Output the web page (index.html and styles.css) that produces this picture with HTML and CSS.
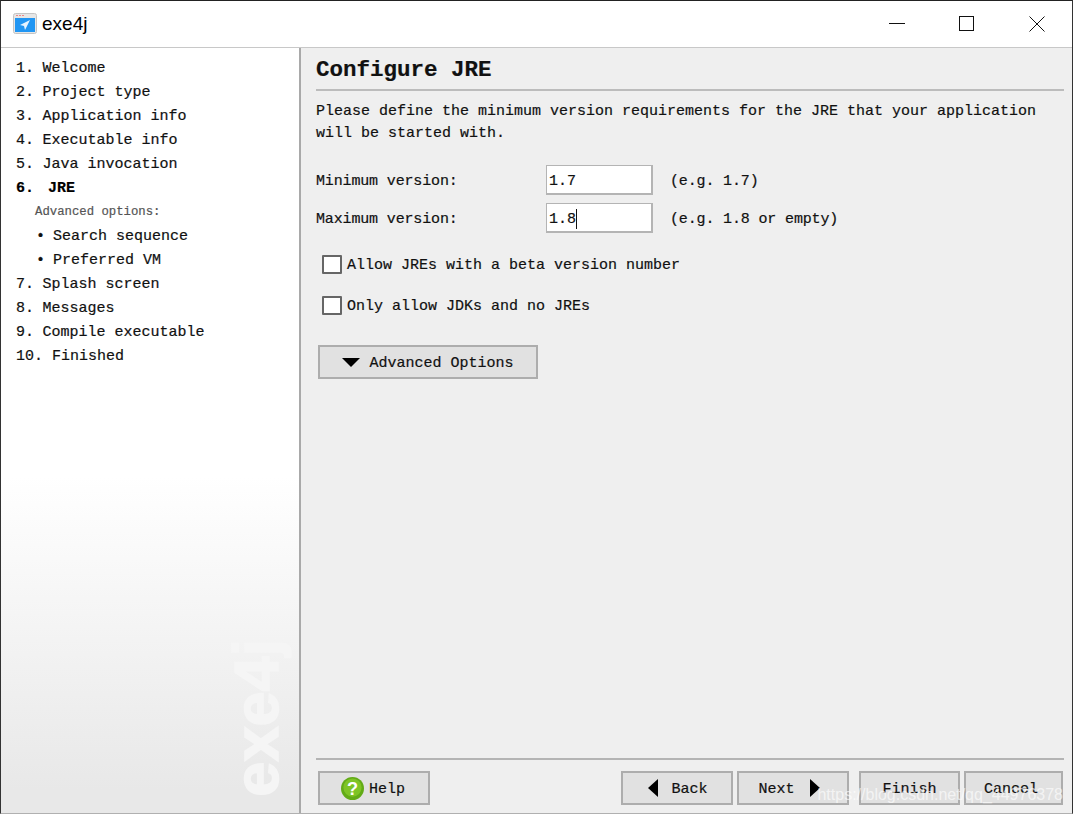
FILE: index.html
```html
<!DOCTYPE html>
<html lang="en">
<head>
    <meta charset="UTF-8">
    <meta name="viewport" content="width=device-width, initial-scale=1.0">
    <title>exe4j</title>
    <link rel="stylesheet" href="styles.css">
</head>
<body>
    <div class="window">
        <!-- Titelleiste -->
        <header class="titlebar">
            <svg class="app-icon" width="24" height="21" viewBox="0 0 24 21">
                <rect x="0.5" y="0.5" width="23" height="20" rx="2" fill="#e6e6e6" stroke="#c4c4c4"/>
                <rect x="3" y="2" width="2" height="1" fill="#e88"/>
                <rect x="6" y="2" width="2" height="1" fill="#e88"/>
                <rect x="9" y="2" width="2" height="1" fill="#e88"/>
                <rect x="2" y="5" width="20" height="14" fill="#2196f3"/>
                <path d="M17 7 L7 12 L11 13 L12 17 Z" fill="#e6f4ff"/>
            </svg>
            <span class="app-title">exe4j</span>
            <div class="window-controls">
                <svg class="win-btn" width="16" height="16" viewBox="0 0 16 16"><path d="M0 7.5H16" stroke="#111"/></svg>
                <svg class="win-btn" width="16" height="16" viewBox="0 0 16 16"><rect x="0.5" y="0.5" width="14" height="14" fill="none" stroke="#111"/></svg>
                <svg class="win-btn" width="16" height="16" viewBox="0 0 16 16"><path d="M0.5 0.5L15.5 15.5M15.5 0.5L0.5 15.5" stroke="#111"/></svg>
            </div>
        </header>

        <div class="layout">
            <!-- Schritte links -->
            <nav class="sidebar">
                <div class="step"><span class="num">1.</span>Welcome</div>
                <div class="step"><span class="num">2.</span>Project type</div>
                <div class="step"><span class="num">3.</span>Application info</div>
                <div class="step"><span class="num">4.</span>Executable info</div>
                <div class="step"><span class="num">5.</span>Java invocation</div>
                <div class="step current"><span class="num">6.</span>JRE</div>
                <div class="step sub-title">Advanced options:</div>
                <div class="step sub"><span class="dot">•</span>Search sequence</div>
                <div class="step sub"><span class="dot">•</span>Preferred VM</div>
                <div class="step"><span class="num">7.</span>Splash screen</div>
                <div class="step"><span class="num">8.</span>Messages</div>
                <div class="step"><span class="num">9.</span>Compile executable</div>
                <div class="step"><span class="num wide">10.</span>Finished</div>
                <div class="brand">exe4j</div>
            </nav>

            <!-- Inhalt -->
            <main class="content">
                <h1 class="heading">Configure JRE</h1>
                <p class="intro">Please define the minimum version requirements for the JRE that your application<br>will be started with.</p>

                <div class="form-row">
                    <label class="form-label">Minimum version:</label>
                    <div class="field">1.7</div>
                    <span class="hint">(e.g. 1.7)</span>
                </div>
                <div class="form-row">
                    <label class="form-label">Maximum version:</label>
                    <div class="field">1.8<span class="caret"></span></div>
                    <span class="hint">(e.g. 1.8 or empty)</span>
                </div>

                <div class="check-row first"><span class="checkbox"></span><span class="check-text">Allow JREs with a beta version number</span></div>
                <div class="check-row"><span class="checkbox"></span><span class="check-text">Only allow JDKs and no JREs</span></div>

                <button class="btn advanced"><span class="tri-down"></span>Advanced Options</button>

                <footer class="actions">
                    <button class="btn help">
                        <svg class="help-icon" width="23" height="23" viewBox="0 0 24 24">
                            <circle cx="12" cy="12" r="12" fill="#62ab17"/>
                            <circle cx="12" cy="11" r="9.5" fill="#7ec425"/>
                            <text class="help-mark" x="12" y="18.5" text-anchor="middle">?</text>
                        </svg>
                        Help
                    </button>
                    <div class="nav-buttons">
                        <button class="btn nav back"><span class="tri-left"></span>Back</button>
                        <button class="btn nav next">Next<span class="tri-right"></span></button>
                    </div>
                    <div class="end-buttons">
                        <button class="btn finish">Finish</button>
                        <button class="btn cancel">Cancel</button>
                    </div>
                </footer>
            </main>
        </div>
        <div class="watermark">https://blog.csdn.net/qq_44976378</div>
    </div>
</body>
</html>
```

FILE: styles.css
```css
* {
    box-sizing: border-box;
}

body {
    margin: 0;
    height: 814px;
    overflow: hidden;
    font-family: "Liberation Mono", monospace;
    font-size: 15px;
    color: #111;
}

.window {
    position: relative;
    height: 814px;
    display: flex;
    flex-direction: column;
    border-top: 1px solid #222;
    border-left: 1px solid #333;
    border-right: 1px solid #333;
    border-bottom: 1px solid #b0b0b0;
    background: #efefef;
}

.titlebar {
    height: 47px;
    flex: none;
    display: flex;
    align-items: center;
    padding-left: 12px;
    background: #fff;
    border-bottom: 1px solid #c8c8c8;
}

.app-icon {
    margin: 0 5px 2px 0;
}

.app-title {
    font-family: "Liberation Sans", sans-serif;
    font-size: 19px;
    color: #000;
}

.window-controls {
    margin-left: auto;
    display: flex;
    gap: 54px;
    padding-right: 27px;
}

.layout {
    flex: 1;
    display: flex;
    min-height: 0;
    -webkit-text-stroke: 0.2px;
}

.sidebar {
    position: relative;
    width: 300px;
    flex: none;
    padding: 9px 0 0 15px;
    background: linear-gradient(to bottom, #fff 0%, #fff 56%, #e8e8e8 97%);
    border-right: 2px solid #a9a9a9;
}

.step {
    height: 24px;
    line-height: 24px;
    white-space: nowrap;
}

.num {
    display: inline-block;
    width: 26.5px;
}

.num.wide {
    width: 36px;
}

.current {
    font-weight: bold;
    color: #000;
}

.current .num {
    width: 32px;
}

.sub-title {
    line-height: 22px;
    padding-left: 19px;
    font-size: 12.3px;
    color: #555;
}

.sub {
    padding-left: 20px;
}

.dot {
    display: inline-block;
    width: 17px;
}

.brand {
    position: absolute;
    right: 15px;
    bottom: 16px;
    writing-mode: vertical-rl;
    transform: rotate(180deg);
    font-family: "Liberation Sans", sans-serif;
    font-size: 63px;
    font-weight: bold;
    line-height: 56px;
    color: #f5f5f5;
    -webkit-text-stroke: 1.5px #f5f5f5;
}

.content {
    flex: 1;
    min-width: 0;
    display: flex;
    flex-direction: column;
    padding: 9px 8px 8px 15px;
}

.heading {
    margin: 0;
    height: 34px;
    line-height: 26px;
    font-size: 22.5px;
    font-weight: bold;
    color: #111;
    border-bottom: 2px solid #bcbcbc;
}

.intro {
    margin: 10px 0 20px;
    line-height: 22px;
    white-space: nowrap;
}

.form-row {
    display: flex;
    align-items: center;
    height: 30px;
    margin-bottom: 8px;
}

.form-label,
.hint {
    padding-top: 3px;
    letter-spacing: -0.15px;
}

.form-label {
    width: 230px;
}

.field {
    width: 107px;
    height: 30px;
    padding: 3px 0 0 2px;
    background: #fff;
    border: 1px solid #b4b4b4;
    border-width: 1px 2px 2px 1px;
    display: flex;
    align-items: center;
}

.caret {
    width: 1px;
    height: 20px;
    background: #111;
}

.hint {
    margin-left: 17px;
}

.check-row {
    display: flex;
    align-items: center;
    height: 20px;
    margin: 0 0 21px 6px;
}

.check-row.first {
    margin-top: 13px;
}

.checkbox {
    width: 20px;
    height: 19px;
    margin-right: 5px;
    background: #fff;
    border: 2px solid #666;
    border-radius: 1px;
}

.check-text {
    padding-top: 3px;
}

.btn {
    height: 34px;
    padding: 3px 0 0;
    display: flex;
    align-items: center;
    justify-content: center;
    font: inherit;
    color: inherit;
    background: #e1e1e1;
    border: 2px solid #adadad;
}

.advanced {
    width: 220px;
    margin: 9px 0 0 2px;
    flex: none;
}

.tri-down {
    width: 0;
    height: 0;
    margin: 0 9px 3px 0;
    border-left: 9px solid transparent;
    border-right: 9px solid transparent;
    border-top: 9px solid #000;
}

.actions {
    margin-top: auto;
    padding: 11px 1px 0 2px;
    display: flex;
    border-top: 2px solid #b4b4b4;
}

.help {
    width: 112px;
    gap: 5px;
    padding-right: 2px;
}

.help-icon {
    margin-bottom: 3px;
}

.help-mark {
    font-family: "Liberation Sans", sans-serif;
    font-size: 19px;
    font-weight: bold;
    fill: #fff;
}

.nav-buttons {
    margin-left: auto;
    display: flex;
    gap: 4px;
}

.nav {
    width: 112px;
}

.back {
    padding-left: 2px;
}

.next {
    padding-right: 8px;
}

.tri-left {
    width: 0;
    height: 0;
    margin: 0 13px 3px 0;
    border-top: 9px solid transparent;
    border-bottom: 9px solid transparent;
    border-right: 10px solid #000;
}

.tri-right {
    width: 0;
    height: 0;
    margin: 0 0 3px 15px;
    border-top: 9px solid transparent;
    border-bottom: 9px solid transparent;
    border-left: 10px solid #000;
}

.end-buttons {
    margin-left: 10px;
    display: flex;
    gap: 4px;
}

.finish {
    width: 101px;
}

.cancel {
    width: 99px;
    padding-right: 5px;
}

.watermark {
    position: absolute;
    right: 9px;
    bottom: 9px;
    font-family: "Liberation Sans", sans-serif;
    font-size: 16px;
    color: rgba(255, 255, 255, 0.65);
    white-space: nowrap;
}
```
